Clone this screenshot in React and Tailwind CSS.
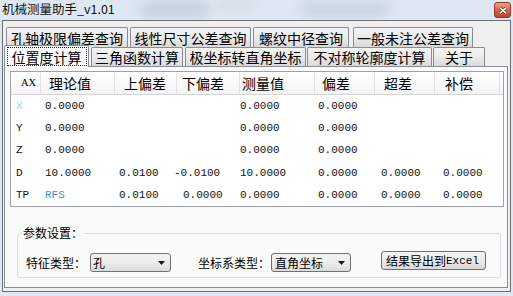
import React from "react";

const CJK = "font-['Noto_Sans_CJK_SC',sans-serif]";
const MONO = "font-['Liberation_Mono',monospace]";

function Tab({ w, children, selected }) {
  if (selected) {
    return (
      <div
        className={`relative z-10 h-[22px] -mb-[1px] ${w} shrink-0 border border-b-0 border-[#898c95] rounded-t-[2px] bg-white flex items-start justify-center pt-[1px]`}
      >
        <div className="h-[19px] w-[80px] border border-dotted border-[#222] flex items-center justify-center text-[14px] leading-[16px] text-black">
          {children}
        </div>
      </div>
    );
  }
  return (
    <div
      className={`h-full ${w} shrink-0 border border-b-0 border-[#898c95] rounded-t-[2px] bg-gradient-to-b from-[#f4f4f4] via-[#ebebeb] to-[#dadada] flex items-center justify-center text-[14px] leading-[16px] text-black`}
    >
      {children}
    </div>
  );
}

function Arrow() {
  return (
    <svg width="7" height="4" viewBox="0 0 7 4" className="shrink-0">
      <path d="M0 0 H7 L3.5 4 Z" fill="#1a1a1a" />
    </svg>
  );
}

const rows = [
  { ax: "X", axc: "text-[#8fdde6]", v: ["0.0000", "", "", "0.0000", "0.0000", "", ""] },
  { ax: "Y", v: ["0.0000", "", "", "0.0000", "0.0000", "", ""] },
  { ax: "Z", v: ["0.0000", "", "", "0.0000", "0.0000", "", ""] },
  { ax: "D", v: ["10.0000", "0.0100", "-0.0100", "10.0000", "0.0000", "0.0000", "0.0000"] },
  { ax: "TP", v: ["RFS", "0.0100", " 0.0000", "0.0000", "0.0000", "0.0000", "0.0000"] },
];

const dataW = ["w-[74px]", "w-[55px]", "w-[66px]", "w-[78px]", "w-[63px]", "w-[62px]", "w-[60px]"];

export default function App() {
  return (
    <div className={`w-[513px] h-[296px] relative overflow-hidden bg-[#dfe8f2] ${CJK}`}>
      {/* blurred aero background blobs */}
      <div className="absolute left-[140px] top-[2px] w-[70px] h-[14px] rounded-full bg-[#b9c4cf] blur-[6px] opacity-70" />
      <div className="absolute left-[300px] top-[3px] w-[90px] h-[12px] rounded-full bg-[#bcc6d0] blur-[6px] opacity-70" />
      <div className="absolute left-[215px] top-[0px] w-[40px] h-[10px] rounded-full bg-[#cfd7df] blur-[5px] opacity-70" />

      {/* title bar */}
      <div className="relative h-[20px] flex items-start justify-between pl-[2px] pr-[2px] pt-[1px]">
        <span className="text-[12.5px] leading-[16px] text-[#111]">机械测量助手_v1.01</span>
        <div className="w-[17px] h-[16px] mt-[1px] rounded-[3px] border border-[#8e3a2a] bg-gradient-to-b from-[#e9a08a] via-[#d4664c] to-[#c0442e] flex items-center justify-center">
          <svg width="8" height="7" viewBox="0 0 8 7">
            <path d="M1 0.8 L7 6.2 M7 0.8 L1 6.2" stroke="#5a1a10" strokeWidth="2.6" />
            <path d="M1 0.8 L7 6.2 M7 0.8 L1 6.2" stroke="#ffffff" strokeWidth="1.6" />
          </svg>
        </div>
      </div>

      {/* client area */}
      <div className="relative ml-[2px] w-[509px] h-[272px] border border-[#6b6f75] bg-[#f0f0f0] flex flex-col">
        <div className="ml-[1px] mt-[6px] w-[504px] flex flex-col">
          {/* tab row 1 */}
          <div className="h-[20px] flex pl-[2px] gap-[2px]">
            <Tab w="w-[122px]">孔轴极限偏差查询</Tab>
            <Tab w="w-[121px]">线性尺寸公差查询</Tab>
            <Tab w="w-[96px]">螺纹中径查询</Tab>
            <div className="w-[1px] -ml-[1px]" />
            <Tab w="w-[120px]">一般未注公差查询</Tab>
          </div>
          {/* tab row 2 */}
          <div className="h-[19px] flex items-end">
            <Tab w="w-[85px]" selected>位置度计算</Tab>
            <div className="w-[2px] shrink-0" />
            <div className="h-full flex gap-[2px]">
              <Tab w="w-[92px]">三角函数计算</Tab>
              <Tab w="w-[121px]">极坐标转直角坐标</Tab>
            </div>
            <div className="h-full flex gap-[1px] ml-[1px]">
              <Tab w="w-[125px]">不对称轮廓度计算</Tab>
              <Tab w="w-[52px]">关于</Tab>
            </div>
          </div>
          {/* tab panel */}
          <div className="w-[504px] h-[222px] border border-[#898c95] bg-[#fafafa] pt-[4px] pl-[5px] flex flex-col">
            {/* list view */}
            <div className="w-[494px] h-[136px] border border-[#9ea2a8] bg-white flex flex-col">
              <div className="h-[23px] flex bg-gradient-to-b from-white to-[#f3f4f6] border-b border-[#d5d5d5] text-[14px] leading-[16px] text-black">
                <div className="w-[30px] pl-[10px] flex items-center border-r border-[#e3e3e3] font-['Liberation_Serif',serif] text-[10.5px]">AX</div>
                <div className="w-[74px] pl-[8px] flex items-center border-r border-[#e3e3e3]">理论值</div>
                <div className="w-[62px] pl-[9px] flex items-center border-r border-[#e3e3e3]">上偏差</div>
                <div className="w-[63px] pl-[5px] flex items-center border-r border-[#e3e3e3]">下偏差</div>
                <div className="w-[75px] pl-[2px] flex items-center border-r border-[#e3e3e3]">测量值</div>
                <div className="w-[60px] pl-[7px] flex items-center border-r border-[#e3e3e3]">偏差</div>
                <div className="w-[60px] pl-[9px] flex items-center border-r border-[#e3e3e3]">超差</div>
                <div className="w-[65px] pl-[10px] flex items-center border-r border-[#e3e3e3]">补偿</div>
              </div>
              {rows.map((r) => (
                <div key={r.ax} className={`h-[22.5px] flex items-center pl-[5px] ${MONO} text-[11px] leading-[14px] text-[#111]`}>
                  <div className={`w-[29px] ${r.axc || ""}`}>{r.ax}</div>
                  {r.v.map((v, i) => (
                    <div
                      key={i}
                      className={`${dataW[i]} whitespace-pre ${v === "RFS" ? "text-[#4a8fc9]" : ""}`}
                    >
                      {v === " 0.0000" ? <span className="pl-[9px]">0.0000</span> : v}
                    </div>
                  ))}
                </div>
              ))}
            </div>

            {/* group box */}
            <div className="relative mt-[26px] ml-[7px] w-[484px] h-[45px] border border-[#d5dfe5] rounded-[3px]">
              <span className="absolute -top-[9px] left-[4px] px-[1px] bg-[#fafafa] text-[12px] leading-[16px] text-black">参数设置：</span>
              <div className="pt-[17px] pl-[8px] flex items-center text-[12px] leading-[14px] text-black">
                <span className="w-[61px]">特征类型：</span>
                <div className="ml-[3px] w-[81px] h-[19px] rounded-[3px] border border-[#707070] bg-gradient-to-b from-[#f4f4f4] via-[#ececec] to-[#dcdcdc] flex items-center justify-between pl-[2px] pr-[5px]">
                  <span>孔</span>
                  <Arrow />
                </div>
                <span className="ml-[27px] w-[72px]">坐标系类型：</span>
                <div className="ml-[1px] w-[80px] h-[19px] rounded-[3px] border border-[#707070] bg-gradient-to-b from-[#f4f4f4] via-[#ececec] to-[#dcdcdc] flex items-center justify-between pl-[3px] pr-[5px]">
                  <span>直角坐标</span>
                  <Arrow />
                </div>
                <div className="ml-[30px] mb-[4px] w-[105px] h-[19px] rounded-[3px] border border-[#707070] bg-gradient-to-b from-[#f4f4f4] via-[#ececec] to-[#d8d8d8] flex items-center pl-[4px]">
                  <span>结果导出到</span>
                  <span className={`${MONO} text-[11px]`}>Excel</span>
                </div>
              </div>
            </div>
          </div>
        </div>
      </div>
    </div>
  );
}
